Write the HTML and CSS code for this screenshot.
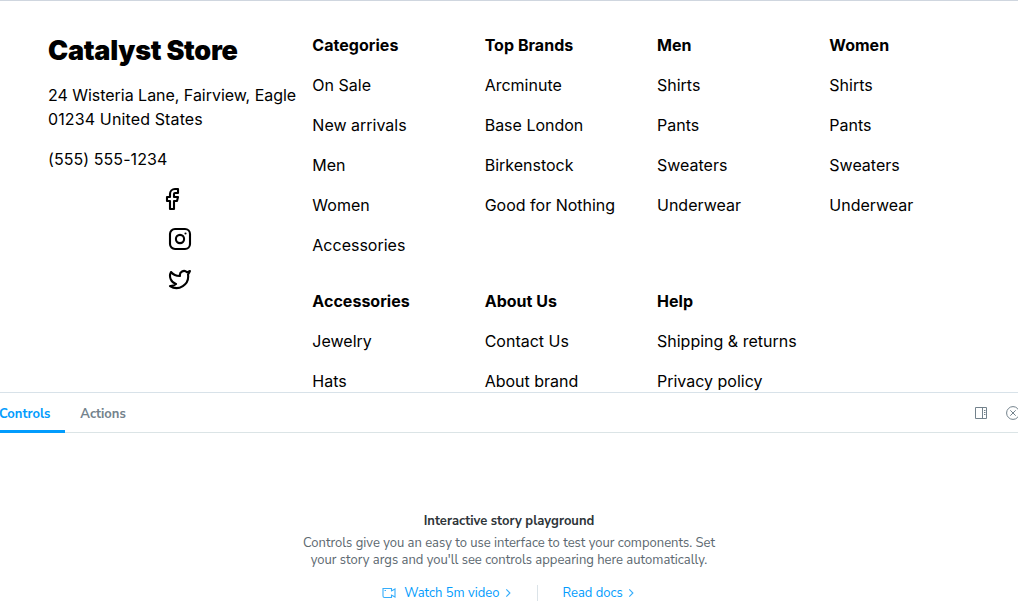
FILE: index.html
```
<!DOCTYPE html>
<html lang="en">
<head>
<meta charset="utf-8">
<title>Footer story</title>
<link rel="stylesheet" href="styles.css">
</head>
<body>
<div class="app">
  <footer class="preview">
    <div class="brand">
      <h1 class="store">Catalyst Store</h1>
      <address class="address"><span class="street">24 Wisteria Lane, Fairview, Eagle</span><br><span class="region">01234 United States</span></address>
      <a class="phone">(555) 555-1234</a>
      <div class="social">
        <svg class="social-icon facebook" viewBox="0 0 24 24"><path d="M18 2h-3a5 5 0 0 0-5 5v3H7v4h3v8h4v-8h3l1-4h-4V7a1 1 0 0 1 1-1h3z"/></svg>
        <svg class="social-icon" viewBox="0 0 24 24"><rect x="2" y="2" width="20" height="20" rx="5"/><circle cx="12" cy="12" r="4.1"/><path d="M17.5 6.5h.01"/></svg>
        <svg class="social-icon" viewBox="0 0 24 24"><path d="M22 4s-.7 2.1-2 3.4c1.6 10-9.4 17.3-18 11.6 2.2.1 4.4-.6 6-2C3 15.5.5 9.6 3 5c2.2 2.6 5.6 4.1 9 4-.9-4.2 4-6.6 7-3.8 1.1 0 3-1.2 3-1.2z"/></svg>
      </div>
    </div>
    <nav class="links">
      <ul class="group"><li class="heading">Categories</li><li>On Sale</li><li>New arrivals</li><li>Men</li><li>Women</li><li>Accessories</li></ul>
      <ul class="group"><li class="heading">Top Brands</li><li>Arcminute</li><li>Base London</li><li>Birkenstock</li><li>Good for Nothing</li></ul>
      <ul class="group"><li class="heading">Men</li><li>Shirts</li><li>Pants</li><li>Sweaters</li><li>Underwear</li></ul>
      <ul class="group"><li class="heading">Women</li><li>Shirts</li><li>Pants</li><li>Sweaters</li><li>Underwear</li></ul>
      <ul class="group"><li class="heading">Accessories</li><li>Jewelry</li><li>Hats</li></ul>
      <ul class="group"><li class="heading">About Us</li><li>Contact Us</li><li>About brand</li></ul>
      <ul class="group"><li class="heading">Help</li><li>Shipping &amp; returns</li><li>Privacy policy</li></ul>
    </nav>
  </footer>
  <section class="addons">
    <div class="tabbar">
      <div class="tab active">Controls</div>
      <div class="tab">Actions</div>
      <div class="tools">
        <svg class="tool" viewBox="0 0 14 14"><path d="M1.5 1.5h11v11h-11zM8.5 1.5v11M10 4.5h1.5M10 6.5h1.5M10 8.5h1.5"/></svg>
        <svg class="tool" viewBox="0 0 14 14"><circle cx="7" cy="7" r="6.4"/><path d="M4.3 4.3l5.4 5.4M9.7 4.3L4.3 9.7"/></svg>
      </div>
    </div>
    <div class="empty">
      <div class="title">Interactive story playground</div>
      <p class="description">Controls give you an easy to use interface to test your components. Set<br>your story args and you'll see controls appearing here automatically.</p>
      <div class="actions">
        <a class="action">
          <svg class="video" viewBox="0 0 14 14"><path d="M1 2.5h8.5v2.4l3.5-2v8.2l-3.5-2v2.4H2.5A1.5 1.5 0 0 1 1 10zM2.5 4.5H4"/></svg>
          <span>Watch 5m video</span>
          <svg class="chevron" viewBox="0 0 8 8"><path d="M2.3.4L5.9 4 2.3 7.6"/></svg>
        </a>
        <div class="divider"></div>
        <a class="action">
          <span>Read docs</span>
          <svg class="chevron" viewBox="0 0 8 8"><path d="M2.3.4L5.9 4 2.3 7.6"/></svg>
        </a>
      </div>
    </div>
  </section>
</div>
</body>
</html>
```
FILE: styles.css
```
* { box-sizing: border-box; }
body { margin: 0; background: #fff; overflow: hidden; }
.app { display: flex; flex-direction: column; width: 1018px; height: 602px; overflow: hidden; }
.preview {
  display: grid;
  grid-template-columns: 248px 657.33px;
  column-gap: 16.33px;
  height: 392px;
  flex: none;
  padding: 32px 48px 0;
  border-top: 1px solid #cfd6df;
  overflow: hidden;
  color: #000;
  font: 16px/24px Inter, sans-serif;
}
.brand { white-space: nowrap; }
.store { margin: 0 0 14px; font-size: 27px; line-height: 36px; font-weight: 900; letter-spacing: -0.28px; }
.address { font-style: normal; }
.street { letter-spacing: -0.03px; }
.region { letter-spacing: 0.13px; }
.phone { display: block; margin-top: 16px; letter-spacing: 0.07px; }
.social { display: flex; flex-direction: column; gap: 16px; margin: 16px 0 0 120px; }
.social-icon { width: 24px; height: 24px; fill: none; stroke: #000; stroke-width: 2.1; stroke-linecap: round; stroke-linejoin: round; }
.facebook { margin-left: -8px; }
.links { display: grid; grid-template-columns: repeat(4, 140.33px); gap: 32px; align-content: start; }
.group { display: flex; flex-direction: column; gap: 16px; margin: 0; padding: 0; list-style: none; white-space: nowrap; }
.heading { font-weight: 700; letter-spacing: 0.03px; }
.addons { flex: 1; border-top: 1px solid #d8e2e9; font-family: "Nunito Sans", Lato, "Open Sans", sans-serif; font-size: 13px; }
.tabbar { display: flex; height: 40px; border-bottom: 1px solid #dbe4e6; color: #73828c; font-weight: 700; }
.tab { height: 40px; padding: 0 15px; line-height: 43px; border-bottom: 3px solid transparent; }
.active { width: 65.3px; padding-left: 0; text-indent: -1px; color: #029cfd; border-color: #029cfd; }
.tools { display: flex; align-items: center; gap: 18px; margin-left: auto; margin-right: -2px; }
.tool { width: 14px; height: 14px; flex: none; fill: none; stroke: #73828c; }
.empty { display: flex; flex-direction: column; align-items: center; padding-top: 79px; color: #5c6870; white-space: nowrap; text-align: center; line-height: 17px; }
.title { color: #2e3438; font-weight: 700; line-height: 18px; }
.description { margin: 5px 0 0; }
.actions { display: flex; align-items: center; height: 16px; margin: 16px 1px 0 0; color: #029cfd; }
.action { display: flex; align-items: center; }
.video { width: 14px; height: 14px; margin-right: 8px; fill: none; stroke: #35adfb; stroke-width: 1.1; }
.chevron { width: 8px; height: 8px; margin-left: 4px; fill: none; stroke: #35adfb; stroke-width: 1.1; }
.divider { width: 1px; height: 16px; margin: 0 25px; background: #dbe3e8; }
```
